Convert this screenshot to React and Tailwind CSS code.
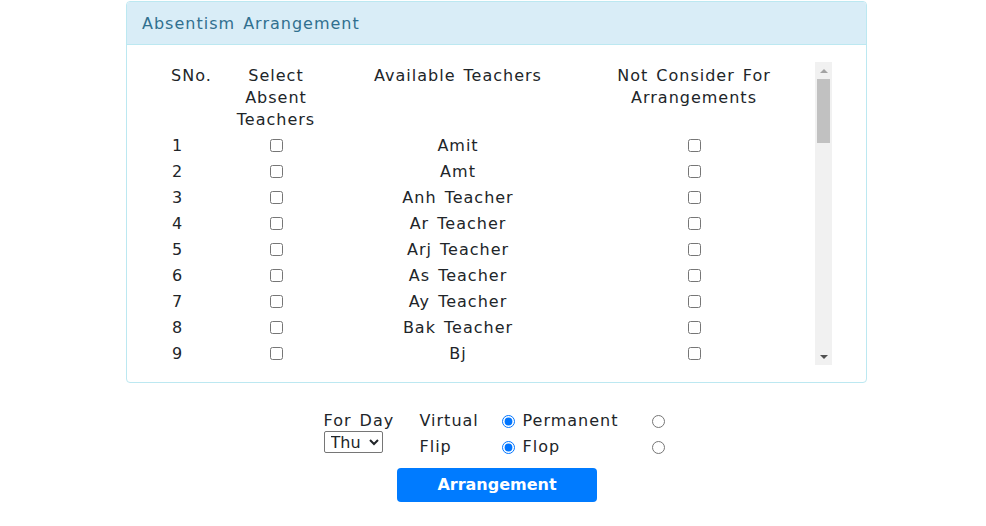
import React from 'react';

const teachers = [
  'Amit', 'Amt', 'Anh Teacher', 'Ar Teacher', 'Arj Teacher', 'As Teacher', 'Ay Teacher', 'Bak Teacher', 'Bj',
  'Bk Teacher', 'Ch Teacher', 'Da Teacher', 'Dk', 'Ds Teacher', 'Gk Teacher', 'Gp', 'Hr Teacher', 'Jk Teacher',
  'Jy', 'Kk Teacher', 'Km Teacher', 'Ks', 'Lk Teacher', 'Mk Teacher', 'Mn', 'Nk Teacher', 'Np Teacher', 'Pk',
  'Pr Teacher', 'Ps Teacher', 'Rk Teacher', 'Rm', 'Rs Teacher', 'Sa Teacher', 'Sk Teacher', 'Sm', 'Sn Teacher',
  'Sr Teacher', 'St', 'Sy Teacher', 'Tk Teacher', 'Ts', 'Uk Teacher', 'Vk Teacher', 'Vs', 'Yk Teacher',
];

// drawn scrollbar, classic windows look
const ScrollBar = () => (
  <div className="flex w-[17px] shrink-0 flex-col bg-[#f1f1f1]">
    <div className="flex h-[17px] items-center justify-center">
      <div className="h-0 w-0 border-x-[4px] border-b-[4px] border-x-transparent border-b-[#a3a3a3]" />
    </div>
    <div className="flex-1 px-[2px]">
      <div className="h-[64px] bg-[#c1c1c1]" />
    </div>
    <div className="flex h-[17px] items-center justify-center">
      <div className="h-0 w-0 border-x-[4px] border-t-[4px] border-x-transparent border-t-[#505050]" />
    </div>
  </div>
);

export default function App() {
  return (
    <div className="min-h-[526px] bg-white text-[16px] leading-[22px] tracking-[1px] text-[#212529] [word-spacing:2px]" style={{ fontFamily: '"DejaVu Sans", Verdana, sans-serif' }}>
      <div className="ml-[126px] mt-[1px] w-[741px] rounded-[4px] border border-[#bce8f1] bg-white">
        <div className="h-[43px] rounded-t-[3px] border-b border-[#bce8f1] bg-[#d9edf7] px-[15px] pt-[11px] text-[#31708f]">
          Absentism Arrangement
        </div>
        <div className="pl-[19px] pr-[34px] pt-[17px] pb-[17px]">
          <div className="flex h-[303px]">
            <div className="flex-1 overflow-y-auto [scrollbar-width:none]">
              <table className="table-fixed border-collapse">
                <colgroup>
                  <col className="w-[90px]" />
                  <col className="w-[80px]" />
                  <col className="w-[284px]" />
                  <col className="w-[188px]" />
                </colgroup>
                <thead>
                  <tr className="align-top">
                    <th className="pl-[25px] pt-[3px] pb-[1px] text-left font-normal">SNo.</th>
                    <th className="pt-[3px] pb-[1px] text-center font-normal">Select Absent Teachers</th>
                    <th className="pt-[3px] pb-[1px] text-center font-normal">Available Teachers</th>
                    <th className="pt-[3px] pb-[1px] text-center font-normal">Not Consider For Arrangements</th>
                  </tr>
                </thead>
                <tbody>
                  {teachers.map((name, i) => (
                    <tr key={i}>
                      <td className="pl-[26px] pt-[3px] pb-[1px]">{i + 1}</td>
                      <td className="py-[2px] text-center"><input type="checkbox" className="m-0 align-middle" /></td>
                      <td className="pt-[3px] pb-[1px] text-center">{name}</td>
                      <td className="py-[2px] text-center"><input type="checkbox" className="m-0 align-middle" /></td>
                    </tr>
                  ))}
                </tbody>
              </table>
            </div>
            <ScrollBar />
          </div>
        </div>
      </div>

      <div className="mt-[25px] flex flex-col items-center">
        <table className="ml-[3px] table-fixed border-collapse">
          <colgroup>
            <col className="w-[96px]" />
            <col className="w-[82px]" />
            <col className="w-[150px]" />
            <col className="w-[14px]" />
          </colgroup>
          <tbody>
            <tr className="h-[26px]">
              <td className="whitespace-nowrap">For Day</td>
              <td>Virtual</td>
              <td><label className="flex items-center gap-[8px]"><input type="radio" name="virtual" defaultChecked className="m-0" />Permanent</label></td>
              <td><input type="radio" name="virtual" className="m-0 align-middle" /></td>
            </tr>
            <tr className="h-[26px]">
              <td className="align-top">
                <select className="-mt-[3px] block h-[22px] w-[59px] rounded-[2px] border border-[#767676] bg-white px-[2px] text-[16px] tracking-normal" defaultValue="Thu">
                  <option>Mon</option>
                  <option>Tue</option>
                  <option>Wed</option>
                  <option>Thu</option>
                  <option>Fri</option>
                  <option>Sat</option>
                </select>
              </td>
              <td>Flip</td>
              <td><label className="flex items-center gap-[8px]"><input type="radio" name="flip" defaultChecked className="m-0" />Flop</label></td>
              <td><input type="radio" name="flip" className="m-0 align-middle" /></td>
            </tr>
          </tbody>
        </table>
        <button className="ml-[8px] mt-[8px] h-[34px] w-[200px] rounded-[4px] bg-[#007bff] text-[16px] font-bold tracking-normal text-white">
          Arrangement
        </button>
      </div>
    </div>
  );
}
